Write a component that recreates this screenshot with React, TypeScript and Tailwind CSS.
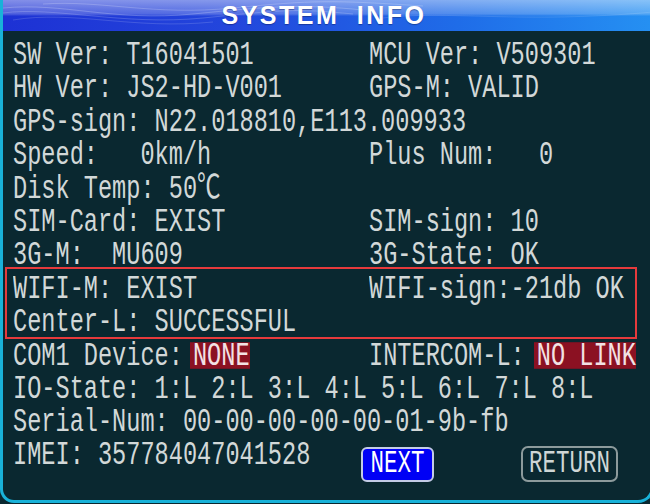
import type { ReactNode } from 'react';

const mono = "font-['Liberation_Mono','Noto_Sans_CJK_SC',monospace]";

function Txt({ children }: { children: ReactNode }) {
  return (
    <span className="inline-block origin-center scale-y-[1.4] whitespace-pre leading-[19px]">
      {children}
    </span>
  );
}

function Badge({ children, className }: { children: ReactNode; className: string }) {
  return (
    <span className={`inline-block h-[19px] bg-[#8b1122] pl-[3px] text-[#f2e1e4] ${className}`}>
      {children}
    </span>
  );
}

function Row({ left, right, wide }: { left: ReactNode; right?: ReactNode; wide?: boolean }) {
  return (
    <div className="grid h-[33.4px] grid-cols-[356px_1fr] items-center">
      <div className={wide ? 'col-span-2' : ''}>
        <Txt>{left}</Txt>
      </div>
      {right && (
        <div>
          <Txt>{right}</Txt>
        </div>
      )}
    </div>
  );
}

function HeaderWaves() {
  return (
    <svg className="pointer-events-none absolute inset-0" width="650" height="31" viewBox="0 0 650 31">
      <g fill="none" stroke="#ffffff" strokeWidth="1">
        <path d="M0 8 C60 2 110 22 190 14 S300 4 360 10" strokeOpacity="0.22" />
        <path d="M0 13 C50 6 120 26 200 18 S290 8 350 14" strokeOpacity="0.18" />
        <path d="M10 20 C70 10 130 30 210 22" strokeOpacity="0.15" />
        <path d="M40 4 C100 0 150 16 230 8 S330 0 420 6" strokeOpacity="0.2" />
        <path d="M380 18 C440 10 520 24 650 12" strokeOpacity="0.12" />
      </g>
    </svg>
  );
}

export default function App() {
  return (
    <div className="h-[504px] w-[650px] overflow-hidden bg-[#0a2830]">
      <div
        className={`flex h-[503px] w-[654px] flex-col overflow-hidden rounded-bl-[14px] rounded-br-[16px] border-b-[3px] border-l-[3px] border-r-[3px] border-[#19b2d9] bg-[#0a2830] text-[23.6px] text-[#d2d8d8] ${mono}`}
      >
        <div className="relative flex h-[31px] shrink-0 items-center justify-center bg-[linear-gradient(180deg,rgba(255,255,255,0.45)_0%,rgba(255,255,255,0.22)_45%,rgba(255,255,255,0)_52%),linear-gradient(90deg,#1d31d4_0%,#2346dc_35%,#1f6ce8_70%,#2590f2_100%)] pr-[6px]">
          <HeaderWaves />
          <span className="relative font-['Liberation_Sans',Arial,sans-serif] text-[25px] leading-none font-bold tracking-[2.5px] text-white [word-spacing:8px] [text-shadow:0_1px_1px_rgba(0,0,40,0.35)]">
            SYSTEM INFO
          </span>
        </div>

        <div className="pt-[6px] pl-[10px]">
          <Row left="SW Ver: T16041501" right="MCU Ver: V509301" />
          <Row left="HW Ver: JS2-HD-V001" right="GPS-M: VALID" />
          <Row left="GPS-sign: N22.018810,E113.009933" wide />
          <Row left="Speed:   0km/h" right="Plus Num:   0" />
          <Row left="Disk Temp: 50℃" />
          <Row left="SIM-Card: EXIST" right="SIM-sign: 10" />
          <Row left="3G-M:  MU609" right="3G-State: OK" />
          <div className="relative">
            <Row left="WIFI-M: EXIST" right="WIFI-sign:-21db OK" />
            <Row left="Center-L: SUCCESSFUL" />
            <div className="pointer-events-none absolute -top-[4px] -bottom-[1px] left-[-8px] right-[14px] border-2 border-[#e63a3c]" />
          </div>
          <Row
            left={
              <>
                COM1 Device:<Badge className="ml-[7px]">NONE</Badge>
              </>
            }
            right={
              <>
                INTERCOM-L:<Badge className="ml-[9px]">NO LINK</Badge>
              </>
            }
          />
          <Row left="IO-State: 1:L 2:L 3:L 4:L 5:L 6:L 7:L 8:L" wide />
          <Row left="Serial-Num: 00-00-00-00-00-01-9b-fb" wide />
          <div className="flex h-[33.4px] items-center">
            <div className="w-[348px]">
              <Txt>IMEI: 357784047041528</Txt>
            </div>
            <button
              type="button"
              className="mt-[20px] flex h-[35px] w-[73px] items-center justify-center rounded-[6px] border-2 border-[#c3cbe6] bg-[#0000f5] text-[22.5px] text-white"
            >
              <Txt>NEXT</Txt>
            </button>
            <button
              type="button"
              className="mt-[20px] ml-[87px] flex h-[36px] w-[97px] items-center justify-center rounded-[7px] border-2 border-[#8d9b9c] text-[22.5px] text-[#cfd6d6]"
            >
              <Txt>RETURN</Txt>
            </button>
          </div>
        </div>
      </div>
    </div>
  );
}
